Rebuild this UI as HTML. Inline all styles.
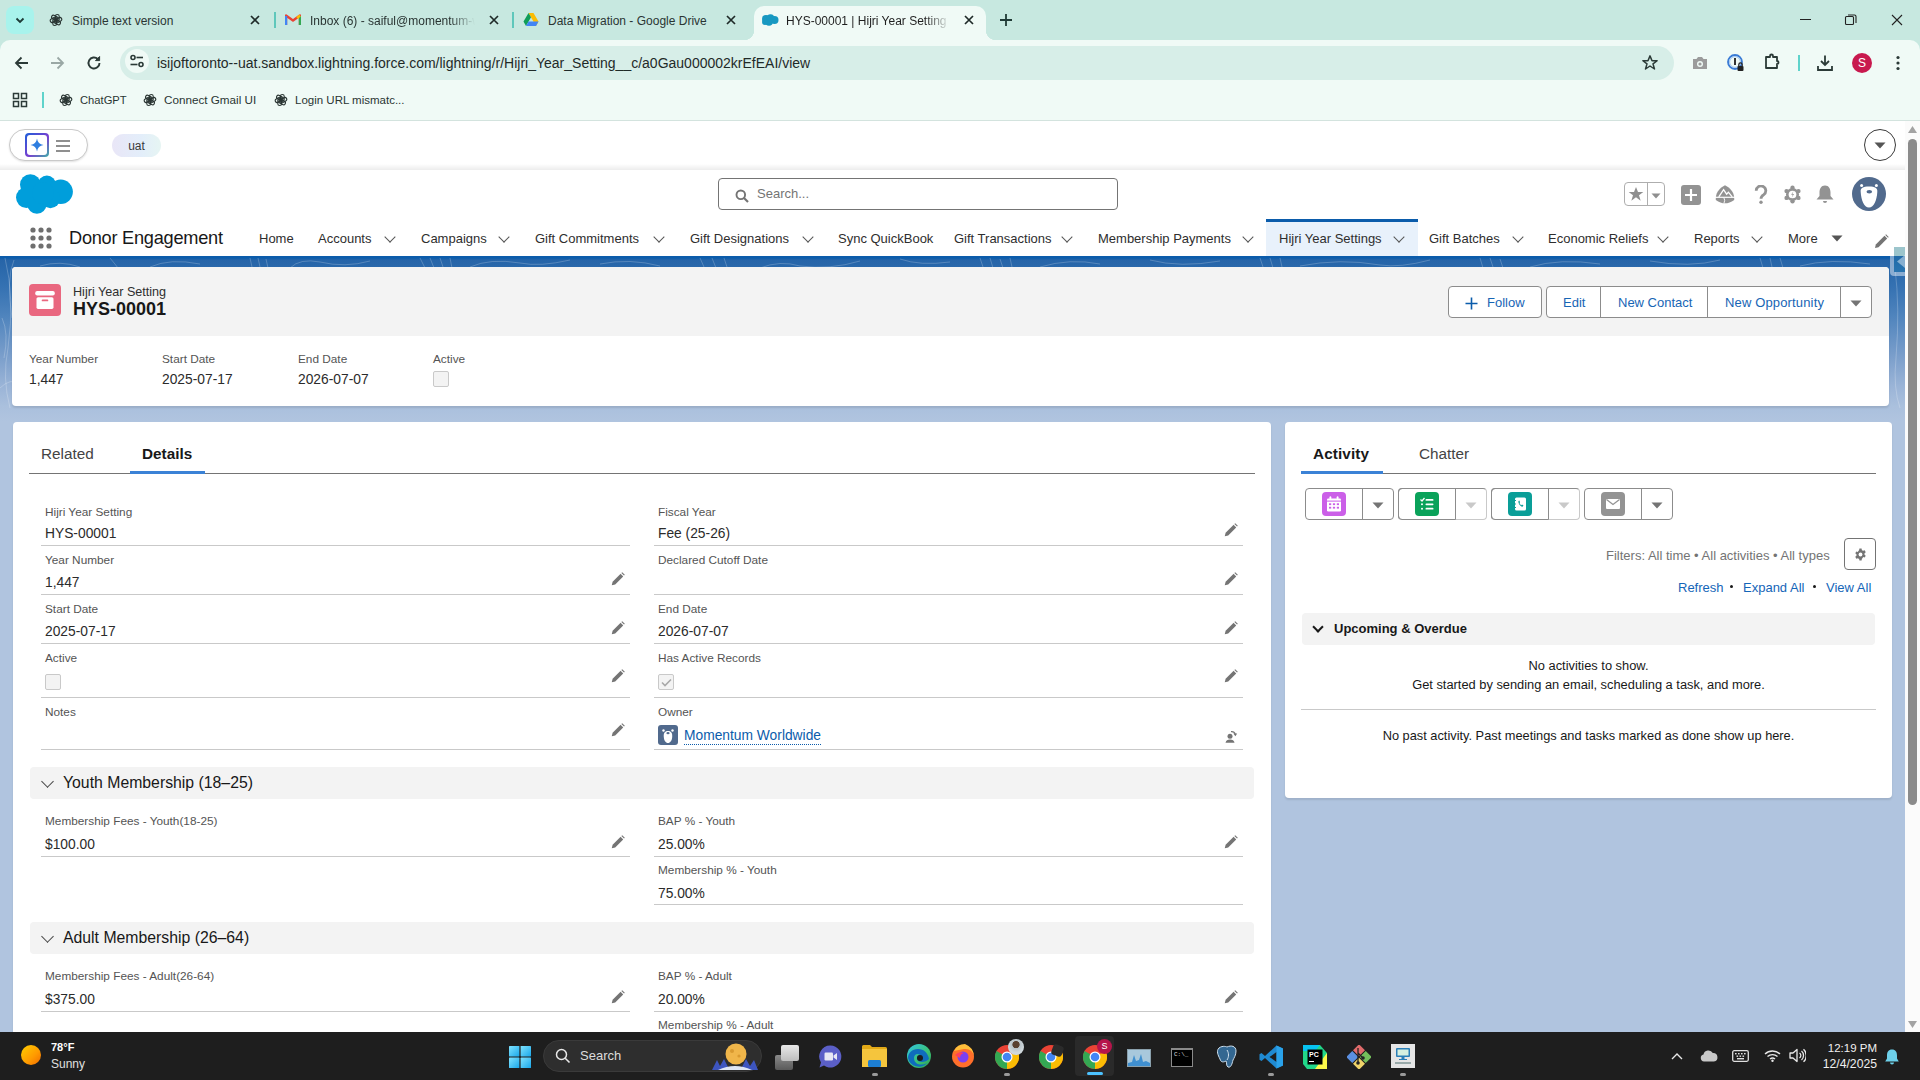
<!DOCTYPE html>
<html><head><meta charset="utf-8">
<style>
*{box-sizing:border-box;margin:0;padding:0}
html,body{width:1920px;height:1080px;overflow:hidden;font-family:"Liberation Sans",sans-serif;color:#181818;background:#b0c4df;position:relative}
.abs{position:absolute}
svg{display:block}
#tabstrip{left:0;top:0;width:1920px;height:40px;background:#c7e8e0}
#toolbar{left:0;top:40px;width:1920px;height:40px;background:#c7e8e0}
#bookmarks{left:0;top:80px;width:1920px;height:41px;background:#f0faf6;border-bottom:1px solid #d3e3de}
.tabt{top:12px;font-size:12px;line-height:18px;color:#2a3533;white-space:nowrap;overflow:hidden}
.fade{-webkit-mask-image:linear-gradient(90deg,#000 85%,transparent 100%)}
.tabx{top:12px;font-size:14px;line-height:18px;color:#1f2a28;width:14px;text-align:center}
.bmt{top:11px;line-height:18px;color:#2a3533;white-space:nowrap}
#sftop{left:0;top:121px;width:1905px;height:49px;background:#fff}
#sfheader{left:0;top:170px;width:1905px;height:48px;background:#fff}
#sfnav{left:0;top:218px;width:1905px;height:38px;background:#fff}
#bg{left:0;top:256px;width:1905px;height:776px;background:linear-gradient(180deg,#0b5cab 0px,#0b5cab 2px,#2664a8 4px,#3471b2 30px,#4f84bd 60px,#7a9ecb 100px,#9ab4d7 130px,#aac0dd 150px,#b0c4df 165px)}
#scroll{left:1905px;top:121px;width:15px;height:911px;background:#fbfbfb}
#taskbar{left:0;top:1032px;width:1920px;height:48px;background:#1e1e1e}
.navt{position:absolute;top:13px;font-size:13px;line-height:16px;color:#2e2e2e;white-space:nowrap}
.chev{position:absolute;top:15px;width:8px;height:8px;margin-left:2px;border-right:1.5px solid #555;border-bottom:1.5px solid #555;transform:rotate(45deg)}
.btn{border:1px solid #8c8c8c;border-radius:4px;background:#fff}
.btxt{font-size:13px;line-height:16px;color:#1765b5;white-space:nowrap}
.hl{font-size:11.8px;line-height:14px;color:#545454;white-space:nowrap}
.hv{font-size:13.8px;line-height:17px;color:#2b2b2b;white-space:nowrap}
.cb{width:16px;height:16px;border:1px solid #c9c9c9;border-radius:2px;background:#f3f3f3}
.fl{font-size:11.8px;line-height:14px;color:#545454;white-space:nowrap}
.fv{font-size:13.8px;line-height:17px;color:#2b2b2b;white-space:nowrap}
.sect{left:30px;width:1224px;height:32px;background:#f3f3f3;border-radius:4px}
.schev{width:9px;height:9px;border-right:1.6px solid #444;border-bottom:1.6px solid #444;transform:rotate(45deg)}
.stt{font-size:15.8px;line-height:20px;color:#181818;white-space:nowrap}
.lnk{font-size:13px;line-height:16px;color:#1465b8;white-space:nowrap}
.card{background:#fff;border-radius:4px;box-shadow:0 2px 2px rgba(0,0,0,.1)}
</style></head>
<body>
<!-- CHROME -->
<div id="tabstrip" class="abs">
  <div class="abs" style="left:6px;top:6px;width:28px;height:28px;border-radius:8px;background:#a8f3ec"></div>
  <svg class="abs" style="left:13px;top:13px" width="14" height="14" viewBox="0 0 14 14"><path d="M3.5 5.5 L7 9 L10.5 5.5" fill="none" stroke="#1d3a36" stroke-width="1.8"/></svg>
  <!-- tab1 -->
  <svg class="abs" style="left:49px;top:13px" width="14" height="14" viewBox="0 0 24 24"><g fill="none" stroke="#2a3533" stroke-width="1.9"><rect x="11" y="2.5" width="6.5" height="12" rx="3.25" transform="rotate(0 12 12)"/><rect x="11" y="2.5" width="6.5" height="12" rx="3.25" transform="rotate(60 12 12)"/><rect x="11" y="2.5" width="6.5" height="12" rx="3.25" transform="rotate(120 12 12)"/><rect x="11" y="2.5" width="6.5" height="12" rx="3.25" transform="rotate(180 12 12)"/><rect x="11" y="2.5" width="6.5" height="12" rx="3.25" transform="rotate(240 12 12)"/><rect x="11" y="2.5" width="6.5" height="12" rx="3.25" transform="rotate(300 12 12)"/></g></svg>
  <div class="abs tabt" style="left:72px;width:170px">Simple text version</div>
  <svg class="abs" style="left:250px;top:15px" width="10" height="10" viewBox="0 0 10 10"><path d="M1 1L9 9M9 1L1 9" stroke="#1f2a28" stroke-width="1.7"/></svg>
  <div class="abs" style="left:274px;top:12px;width:2px;height:16px;background:#5fc7bb"></div>
  <!-- tab2 gmail -->
  <svg class="abs" style="left:285px;top:13px" width="16" height="13" viewBox="0 0 16 13"><path d="M1 12V2.5L8 7.5L15 2.5V12" fill="none" stroke="#ea4335" stroke-width="2.4" stroke-linejoin="round"/><path d="M1 12V3" stroke="#4285f4" stroke-width="2.4"/><path d="M15 12V3" stroke="#34a853" stroke-width="2.4"/><path d="M12 5 L15 2.5" stroke="#fbbc04" stroke-width="2.4"/></svg>
  <div class="abs tabt fade" style="left:310px;width:165px">Inbox (6) - saiful@momentum-w</div>
  <svg class="abs" style="left:489px;top:15px" width="10" height="10" viewBox="0 0 10 10"><path d="M1 1L9 9M9 1L1 9" stroke="#1f2a28" stroke-width="1.7"/></svg>
  <div class="abs" style="left:512px;top:12px;width:2px;height:16px;background:#5fc7bb"></div>
  <!-- tab3 drive -->
  <svg class="abs" style="left:523px;top:12px" width="16" height="15" viewBox="0 0 16 15"><path d="M5.5 1 L10.5 1 L15.5 9.5 L13 14 Z" fill="#fbbc04"/><path d="M5.5 1 L0.5 9.5 L3 14 L8 5.3 Z" fill="#0f9d58"/><path d="M3 14 L13 14 L15.5 9.5 L5.5 9.5 Z" fill="#4285f4"/></svg>
  <div class="abs tabt" style="left:548px;width:170px">Data Migration - Google Drive</div>
  <svg class="abs" style="left:726px;top:15px" width="10" height="10" viewBox="0 0 10 10"><path d="M1 1L9 9M9 1L1 9" stroke="#1f2a28" stroke-width="1.7"/></svg>
  <!-- active tab -->
  <div class="abs" style="left:754px;top:6px;width:232px;height:34px;background:#f0faf6;border-radius:10px 10px 0 0"></div>
  <div class="abs" style="left:744px;top:30px;width:10px;height:10px;background:radial-gradient(circle at 0 0,#c7e8e0 10px,#f0faf6 10.5px)"></div>
  <div class="abs" style="left:986px;top:30px;width:10px;height:10px;background:radial-gradient(circle at 100% 0,#c7e8e0 10px,#f0faf6 10.5px)"></div>
  <svg class="abs" style="left:761px;top:14px" width="18" height="12" viewBox="0 0 18 12"><g fill="#1798c1"><circle cx="5" cy="5" r="4"/><circle cx="9.5" cy="4" r="3.8"/><circle cx="13.5" cy="6" r="4"/><circle cx="8" cy="8" r="3.8"/><circle cx="4" cy="8" r="3"/></g></svg>
  <div class="abs tabt fade" style="left:786px;width:164px;color:#1f1f1f">HYS-00001 | Hijri Year Setting | S</div>
  <svg class="abs" style="left:964px;top:15px" width="10" height="10" viewBox="0 0 10 10"><path d="M1 1L9 9M9 1L1 9" stroke="#1f2a28" stroke-width="1.7"/></svg>
  <svg class="abs" style="left:998px;top:12px" width="16" height="16" viewBox="0 0 16 16"><path d="M8 2V14M2 8H14" stroke="#1f3a36" stroke-width="1.8"/></svg>
  <!-- window controls -->
  <div class="abs" style="left:1800px;top:19px;width:11px;height:1px;background:#222"></div>
  <svg class="abs" style="left:1844px;top:13px" width="14" height="14" viewBox="0 0 14 14"><rect x="1.5" y="3.5" width="8" height="8" rx="1" fill="none" stroke="#222" stroke-width="1.1"/><path d="M4 2H10.5a1.5 1.5 0 0 1 1.5 1.5V10" fill="none" stroke="#222" stroke-width="1.1"/></svg>
  <svg class="abs" style="left:1891px;top:14px" width="12" height="12" viewBox="0 0 12 12"><path d="M1 1L11 11M11 1L1 11" stroke="#222" stroke-width="1.1"/></svg>
</div>
<div id="toolbar" class="abs">
  <div class="abs" style="left:0;top:0;width:1920px;height:40px;background:#f0faf6;border-radius:10px 10px 0 0"></div>
  <svg class="abs" style="left:13px;top:54px;top:14px" width="18" height="18" viewBox="0 0 18 18"><path d="M15 9H3.5M8.5 3.5L3 9L8.5 14.5" fill="none" stroke="#2b3a37" stroke-width="1.8"/></svg>
  <svg class="abs" style="left:48px;top:14px" width="18" height="18" viewBox="0 0 18 18"><path d="M3 9H14.5M9.5 3.5L15 9L9.5 14.5" fill="none" stroke="#9aa8a5" stroke-width="1.8"/></svg>
  <svg class="abs" style="left:85px;top:14px" width="18" height="18" viewBox="0 0 18 18"><path d="M14.5 9A5.5 5.5 0 1 1 12.8 5" fill="none" stroke="#2b3a37" stroke-width="1.9"/><path d="M14.6 2.5V6.6H10.5Z" fill="#2b3a37" stroke="#2b3a37" stroke-width="1"/></svg>
  <div class="abs" style="left:120px;top:6px;width:1554px;height:34px;border-radius:17px;background:#d7eee8"></div>
  <div class="abs" style="left:125px;top:9px;width:24px;height:24px;border-radius:12px;background:#f0faf6"></div>
  <svg class="abs" style="left:129px;top:14px" width="16" height="14" viewBox="0 0 16 14"><g fill="none" stroke="#2b3a37" stroke-width="1.6"><circle cx="4" cy="3.5" r="2"/><path d="M7.5 3.5H14"/><circle cx="12" cy="10.5" r="2"/><path d="M1.5 10.5H8.5"/></g></svg>
  <div class="abs" style="left:157px;top:14px;font-size:14px;line-height:18px;color:#1f2a28;white-space:nowrap">isijoftoronto--uat.sandbox.lightning.force.com/lightning/r/Hijri_Year_Setting__c/a0Gau000002krEfEAI/view</div>
  <svg class="abs" style="left:1641px;top:14px" width="18" height="18" viewBox="0 0 24 24"><path d="M12 2.5L14.7 9H21.5L16 13.2L18 20L12 16L6 20L8 13.2L2.5 9H9.3Z" fill="none" stroke="#2b3a37" stroke-width="2" stroke-linejoin="round"/></svg>
  <svg class="abs" style="left:1691px;top:15px" width="18" height="16" viewBox="0 0 18 16"><path d="M2 4H5.5L7 2H11L12.5 4H16V14H2Z" fill="#9b9b9b"/><circle cx="9" cy="9" r="3" fill="#f0faf6"/><circle cx="9" cy="9" r="1.6" fill="#9b9b9b"/></svg>
  <svg class="abs" style="left:1727px;top:14px" width="20" height="20" viewBox="0 0 20 20"><circle cx="8" cy="8" r="7" fill="none" stroke="#3a7bd5" stroke-width="1.8"/><circle cx="8" cy="8" r="5.4" fill="none" stroke="#9ec3f0" stroke-width="1"/><rect x="7" y="4" width="2" height="7" fill="#333"/><rect x="10.5" y="12" width="6" height="5" rx="1" fill="#222"/><path d="M11.8 12V10.5a1.7 1.7 0 0 1 3.4 0V12" fill="none" stroke="#222" stroke-width="1.2"/></svg>
  <svg class="abs" style="left:1763px;top:13px" width="18" height="18" viewBox="0 0 18 18"><path d="M3 4H7V3a1.5 1.5 0 0 1 3 0V4H14V8a1.5 1.5 0 0 1 0 3V15H3Z" fill="none" stroke="#2b3a37" stroke-width="1.8" stroke-linejoin="round"/></svg>
  <div class="abs" style="left:1798px;top:15px;width:2px;height:16px;background:#5fd3cb"></div>
  <svg class="abs" style="left:1816px;top:14px" width="18" height="18" viewBox="0 0 18 18"><path d="M9 1.5V11M5 7L9 11L13 7" fill="none" stroke="#2b3a37" stroke-width="1.8"/><path d="M2 12V16H16V12" fill="none" stroke="#2b3a37" stroke-width="1.8"/></svg>
  <div class="abs" style="left:1852px;top:13px;width:20px;height:20px;border-radius:10px;background:#c8194e;color:#fff;font-size:12px;line-height:20px;text-align:center">S</div>
  <svg class="abs" style="left:1895px;top:15px" width="6" height="16" viewBox="0 0 6 16"><g fill="#2b3a37"><circle cx="3" cy="2.5" r="1.6"/><circle cx="3" cy="8" r="1.6"/><circle cx="3" cy="13.5" r="1.6"/></g></svg>
</div>
<div id="bookmarks" class="abs">
  <svg class="abs" style="left:12px;top:12px" width="16" height="16" viewBox="0 0 16 16"><g fill="none" stroke="#2b3a37" stroke-width="1.5"><rect x="1.5" y="1.5" width="5" height="5"/><rect x="9.5" y="1.5" width="5" height="5"/><rect x="1.5" y="9.5" width="5" height="5"/><rect x="9.5" y="9.5" width="5" height="5"/></g></svg>
  <div class="abs" style="left:42px;top:12px;width:2px;height:16px;background:#5fd3cb"></div>
  <svg class="abs gpt" style="left:59px;top:93px;top:13px" width="14" height="14" viewBox="0 0 24 24"><g fill="none" stroke="#2a3533" stroke-width="1.9"><rect x="11" y="2.5" width="6.5" height="12" rx="3.25" transform="rotate(0 12 12)"/><rect x="11" y="2.5" width="6.5" height="12" rx="3.25" transform="rotate(60 12 12)"/><rect x="11" y="2.5" width="6.5" height="12" rx="3.25" transform="rotate(120 12 12)"/><rect x="11" y="2.5" width="6.5" height="12" rx="3.25" transform="rotate(180 12 12)"/><rect x="11" y="2.5" width="6.5" height="12" rx="3.25" transform="rotate(240 12 12)"/><rect x="11" y="2.5" width="6.5" height="12" rx="3.25" transform="rotate(300 12 12)"/></g></svg>
  <div class="abs bmt" style="left:80px;font-size:11.2px">ChatGPT</div>
  <svg class="abs gpt" style="left:143px;top:93px;top:13px" width="14" height="14" viewBox="0 0 24 24"><g fill="none" stroke="#2a3533" stroke-width="1.9"><rect x="11" y="2.5" width="6.5" height="12" rx="3.25" transform="rotate(0 12 12)"/><rect x="11" y="2.5" width="6.5" height="12" rx="3.25" transform="rotate(60 12 12)"/><rect x="11" y="2.5" width="6.5" height="12" rx="3.25" transform="rotate(120 12 12)"/><rect x="11" y="2.5" width="6.5" height="12" rx="3.25" transform="rotate(180 12 12)"/><rect x="11" y="2.5" width="6.5" height="12" rx="3.25" transform="rotate(240 12 12)"/><rect x="11" y="2.5" width="6.5" height="12" rx="3.25" transform="rotate(300 12 12)"/></g></svg>
  <div class="abs bmt" style="left:164px;font-size:11.7px">Connect Gmail UI</div>
  <svg class="abs gpt" style="left:274px;top:93px;top:13px" width="14" height="14" viewBox="0 0 24 24"><g fill="none" stroke="#2a3533" stroke-width="1.9"><rect x="11" y="2.5" width="6.5" height="12" rx="3.25" transform="rotate(0 12 12)"/><rect x="11" y="2.5" width="6.5" height="12" rx="3.25" transform="rotate(60 12 12)"/><rect x="11" y="2.5" width="6.5" height="12" rx="3.25" transform="rotate(120 12 12)"/><rect x="11" y="2.5" width="6.5" height="12" rx="3.25" transform="rotate(180 12 12)"/><rect x="11" y="2.5" width="6.5" height="12" rx="3.25" transform="rotate(240 12 12)"/><rect x="11" y="2.5" width="6.5" height="12" rx="3.25" transform="rotate(300 12 12)"/></g></svg>
  <div class="abs bmt" style="left:295px;font-size:11.5px">Login URL mismatc...</div>
</div>
<!-- SF TOP -->
<div id="sftop" class="abs">
  <div class="abs" style="left:9px;top:8px;width:79px;height:32px;border:1px solid #c9c9c9;border-radius:16px;box-shadow:0 1px 2px rgba(0,0,0,.12);background:#fff"></div>
  <div class="abs" style="left:25px;top:12px;width:24px;height:24px;border-radius:4px;background:linear-gradient(135deg,#1b5fd9,#7a3fd0 55%,#3fb0a8)"></div>
  <div class="abs" style="left:27px;top:14px;width:20px;height:20px;border-radius:3px;background:#fff"></div>
  <svg class="abs" style="left:30px;top:17px" width="14" height="14" viewBox="0 0 14 14"><path d="M7 0.5 Q7.8 6.2 13.5 7 Q7.8 7.8 7 13.5 Q6.2 7.8 0.5 7 Q6.2 6.2 7 0.5Z" fill="#2f7ee0"/></svg>
  <svg class="abs" style="left:56px;top:19px" width="14" height="12" viewBox="0 0 14 12"><g stroke="#6b6b6b" stroke-width="1.3"><path d="M0 1H14M0 6H14M0 11H14"/></g></svg>
  <div class="abs" style="left:112px;top:13px;width:49px;height:23px;border-radius:12px;background:linear-gradient(90deg,#e9e6f7,#e3eefa 60%,#e6f5f3);font-size:12px;line-height:25px;text-align:center;color:#3a3a3a">uat</div>
  <div class="abs" style="left:1864px;top:8px;width:32px;height:32px;border:1px solid #3a3a3a;border-radius:16px"></div>
  <svg class="abs" style="left:1874px;top:21px" width="12" height="7" viewBox="0 0 12 7"><path d="M0.5 0.5H11.5L6 6.5Z" fill="#555"/></svg>
</div>
<div class="abs" style="left:0;top:164px;width:1905px;height:6px;background:linear-gradient(180deg,rgba(0,0,0,0),rgba(0,0,0,.075))"></div>
<div id="sfheader" class="abs">
  <svg class="abs" style="left:15px;top:3px" width="59" height="42" viewBox="0 0 59 42"><g fill="#009edb"><circle cx="15.4" cy="11.7" r="10.4"/><circle cx="31.9" cy="11.7" r="9.1"/><circle cx="45.7" cy="18.8" r="12.2"/><circle cx="11.4" cy="24.6" r="10.4"/><circle cx="21.9" cy="31.2" r="9.6"/><circle cx="35.4" cy="25.4" r="9.8"/><circle cx="28" cy="20" r="11"/></g></svg>
  <div class="abs" style="left:718px;top:8px;width:400px;height:32px;border:1px solid #747474;border-radius:4px;background:#fff"></div>
  <svg class="abs" style="left:735px;top:19px" width="14" height="14" viewBox="0 0 14 14"><circle cx="5.8" cy="5.8" r="4.3" fill="none" stroke="#747474" stroke-width="1.9"/><path d="M9 9L13 13" stroke="#747474" stroke-width="2.2"/></svg>
  <div class="abs" style="left:757px;top:16px;font-size:13px;line-height:16px;color:#747474">Search...</div>
  <div class="abs" style="left:1624px;top:12px;width:41px;height:24px;border:1px solid #aeaeae;border-radius:4px"></div>
  <div class="abs" style="left:1647px;top:13px;width:1px;height:22px;background:#aeaeae"></div>
  <svg class="abs" style="left:1628px;top:16px" width="16" height="16" viewBox="0 0 24 24"><path d="M12 1.5L15 9H23L16.5 14L19 22L12 17L5 22L7.5 14L1 9H9Z" fill="#8f8f8f"/></svg>
  <svg class="abs" style="left:1651px;top:23px" width="10" height="6" viewBox="0 0 10 6"><path d="M0.5 0.5H9.5L5 5.5Z" fill="#8f8f8f"/></svg>
  <div class="abs" style="left:1681px;top:15px;width:20px;height:20px;border-radius:3px;background:#939393"></div>
  <svg class="abs" style="left:1681px;top:15px" width="20" height="20" viewBox="0 0 20 20"><path d="M10 4V16M4 10H16" stroke="#fff" stroke-width="2.2"/></svg>
  <svg class="abs" style="left:1715px;top:15px" width="20" height="19" viewBox="0 0 20 19"><path d="M10 0.3 C14.5 2.5 18.6 6.5 19.2 12.5 L19.2 15 C16 17.5 13 18.3 10 18.3 C7 18.3 4 17.5 0.8 15 L0.8 12.5 C1.4 6.5 5.5 2.5 10 0.3Z" fill="#939393"/><path d="M0 12.3 H20" stroke="#fff" stroke-width="1.2"/><path d="M3.8 11.8 L8.6 4.6 L11.6 9.2 L13.4 7.2 L17.2 11.8" fill="none" stroke="#fff" stroke-width="1.3" stroke-linejoin="miter"/><path d="M8.8 12.5 L9.7 15.3 L8.9 18.5" fill="none" stroke="#fff" stroke-width="0.9"/></svg>
  <svg class="abs" style="left:1754px;top:15px" width="14" height="19" viewBox="0 0 14 19"><path d="M2.2 5.8 A4.8 4.8 0 1 1 9.8 9.6 C7.8 10.8 7 11.6 7 13.8" fill="none" stroke="#939393" stroke-width="2.8"/><circle cx="7" cy="17.2" r="1.7" fill="#939393"/></svg>
  <svg class="abs" style="left:1783px;top:15px" width="19" height="19" viewBox="0 0 19.2 19.2"><g fill="#939393"><circle cx="9.60" cy="2.70" r="2.2"/><circle cx="15.58" cy="6.15" r="2.2"/><circle cx="15.58" cy="13.05" r="2.2"/><circle cx="9.60" cy="16.50" r="2.2"/><circle cx="3.62" cy="13.05" r="2.2"/><circle cx="3.62" cy="6.15" r="2.2"/><circle cx="9.6" cy="9.6" r="6.6"/></g><circle cx="9.6" cy="9.6" r="3.9" fill="#fff"/><path d="M10.6 6.4 L8.2 9.9 H9.9 L8.7 12.9 L11.2 9.2 H9.5Z" fill="#939393"/></svg>
  <svg class="abs" style="left:1815px;top:14px" width="20" height="20" viewBox="0 0 20 20"><path d="M10 1.5 C14 1.5 15.5 5 15.5 8.5 V12 L18.5 15.5 H1.5 L4.5 12 V8.5 C4.5 5 6 1.5 10 1.5Z" fill="#939393"/><path d="M8 17 H12 A2 2 0 0 1 8 17Z" fill="#939393"/></svg>
  <div class="abs" style="left:1852px;top:7px;width:34px;height:34px;border-radius:17px;background:#516a8d"></div>
  <svg class="abs" style="left:1852px;top:7px" width="34" height="34" viewBox="0 0 34 34"><path d="M17 9.5 C23 9.5 25.8 11 25.3 15 C24.8 23 22 30.5 17 30.5 C12 30.5 9.2 23 8.7 15 C8.2 11 11 9.5 17 9.5Z" fill="#fff"/><circle cx="9.6" cy="8.6" r="1.5" fill="#fff"/><circle cx="24.4" cy="8.6" r="1.5" fill="#fff"/><ellipse cx="17.3" cy="14.8" rx="2.8" ry="1.8" fill="#516a8d"/></svg>
</div>
<div id="sfnav" class="abs">
  <svg class="abs" style="left:30px;top:9px" width="22" height="22" viewBox="0 0 22 22"><g fill="#6f6f6f"><circle cx="3" cy="3" r="2.6"/><circle cx="11" cy="3" r="2.6"/><circle cx="19" cy="3" r="2.6"/><circle cx="3" cy="11" r="2.6"/><circle cx="11" cy="11" r="2.6"/><circle cx="19" cy="11" r="2.6"/><circle cx="3" cy="19" r="2.6"/><circle cx="11" cy="19" r="2.6"/><circle cx="19" cy="19" r="2.6"/></g></svg>
  <div class="abs" style="left:69px;top:9px;font-size:18.2px;line-height:22px;color:#181818;letter-spacing:-0.25px">Donor Engagement</div>
  <div class="abs" style="left:1266px;top:1px;width:152px;height:37px;background:#e8f1fb"></div>
  <div class="abs" style="left:1266px;top:1px;width:152px;height:3px;background:#0b5cab"></div>
  <div class="navt" style="left:259px">Home</div>
  <div class="navt" style="left:318px">Accounts</div><div class="chev" style="left:384px"></div>
  <div class="navt" style="left:421px">Campaigns</div><div class="chev" style="left:498px"></div>
  <div class="navt" style="left:535px">Gift Commitments</div><div class="chev" style="left:653px"></div>
  <div class="navt" style="left:690px">Gift Designations</div><div class="chev" style="left:802px"></div>
  <div class="navt" style="left:838px">Sync QuickBook</div>
  <div class="navt" style="left:954px">Gift Transactions</div><div class="chev" style="left:1061px"></div>
  <div class="navt" style="left:1098px">Membership Payments</div><div class="chev" style="left:1242px"></div>
  <div class="navt" style="left:1279px">Hijri Year Settings</div><div class="chev" style="left:1393px"></div>
  <div class="navt" style="left:1429px">Gift Batches</div><div class="chev" style="left:1512px"></div>
  <div class="navt" style="left:1548px">Economic Reliefs</div><div class="chev" style="left:1657px"></div>
  <div class="navt" style="left:1694px">Reports</div><div class="chev" style="left:1751px"></div>
  <div class="navt" style="left:1788px">More</div>
  <svg class="abs" style="left:1831px;top:17px" width="12" height="7" viewBox="0 0 12 7"><path d="M0.5 0.5H11.5L6 6.5Z" fill="#555"/></svg>
  <svg class="abs" style="left:1874px;top:16px" width="15" height="15" viewBox="0 0 15 15"><path d="M1 14 L1.8 10.5 L10.5 1.8 L13.2 4.5 L4.5 13.2Z" fill="#747474"/><path d="M11.3 1 L12 0.3 L14.7 3 L14 3.7Z" fill="#747474"/></svg>
</div>
<div id="bg" class="abs"></div>
<svg class="abs" style="left:0;top:258px" width="1905" height="150" viewBox="0 0 1905 150"><g fill="none" stroke="rgba(255,255,255,.22)" stroke-width="1">
<path d="M5 0 Q15 40 8 90 Q2 120 10 150"/><path d="M14 2 Q6 20 12 60"/><path d="M0 130 Q10 120 20 125"/><path d="M2 60 Q9 75 4 100"/>
<path d="M40 8 Q60 2 80 9"/><path d="M110 0 Q115 6 118 10"/><path d="M150 9 Q170 0 200 6"/><path d="M250 0 L252 9 M258 0 L260 9 M266 1 L268 10"/><path d="M290 10 Q300 0 320 4 Q345 10 370 3"/>
<path d="M420 0 L425 10 M430 0 L434 10 M440 0 L443 9 M450 0 L452 10"/><path d="M470 9 Q490 0 520 5 Q540 9 570 2"/><path d="M600 6 Q630 0 660 8"/><path d="M700 0 L704 9 M712 0 L716 10 M724 0 L727 9"/>
<path d="M760 10 Q780 2 800 8 Q830 12 860 3"/><path d="M900 1 Q920 8 950 4"/><path d="M980 0 L983 9 M990 0 L993 10 M1000 1 L1003 10 M1010 0 L1012 9"/><path d="M1040 9 Q1070 0 1100 6"/>
<path d="M1150 2 Q1180 10 1220 3"/><path d="M1260 0 L1263 9 M1270 0 L1273 10 M1280 0 L1282 9"/><path d="M1300 8 Q1340 0 1380 7 Q1400 10 1430 2"/><path d="M1480 0 L1483 10 M1490 0 L1493 9 M1500 1 L1503 10"/>
<path d="M1530 9 Q1560 0 1600 6"/><path d="M1650 3 Q1690 10 1720 2"/><path d="M1760 0 L1763 10 M1770 0 L1772 9 M1780 0 L1783 10"/><path d="M1800 8 Q1830 0 1870 6"/>
<path d="M1895 10 Q1900 50 1896 100 Q1893 130 1900 150"/>
</g></svg>
<!-- header card -->
<div id="hdrcard" class="abs card" style="left:12px;top:267px;width:1877px;height:139px;overflow:hidden">
  <div class="abs" style="left:0;top:0;width:100%;height:69px;background:#f3f3f3"></div>
</div>
<div class="abs" style="left:29px;top:284px;width:32px;height:32px;border-radius:4px;background:#e9677f"></div>
<svg class="abs" style="left:29px;top:284px" width="32" height="32" viewBox="0 0 32 32"><rect x="6.2" y="7.1" width="19.6" height="4.5" rx="2" fill="#fff"/><rect x="7.5" y="13.2" width="17" height="11.7" rx="1.6" fill="#fff"/><rect x="12.7" y="15.6" width="6.6" height="1.7" rx=".85" fill="#e9677f"/></svg>
<div class="abs" style="left:73px;top:284px;font-size:12.6px;line-height:16px;color:#2e2e2e">Hijri Year Setting</div>
<div class="abs" style="left:73px;top:298px;font-size:18px;line-height:22px;font-weight:bold;color:#181818">HYS-00001</div>
<div class="abs btn" style="left:1448px;top:286px;width:94px;height:32px"></div>
<svg class="abs" style="left:1465px;top:297px" width="13" height="13" viewBox="0 0 13 13"><path d="M6.5 0.5V12.5M0.5 6.5H12.5" stroke="#0b5cab" stroke-width="1.6"/></svg>
<div class="abs btxt" style="left:1487px;top:295px">Follow</div>
<div class="abs btn" style="left:1546px;top:286px;width:326px;height:32px"></div>
<div class="abs" style="left:1600px;top:287px;width:1px;height:30px;background:#8c8c8c"></div>
<div class="abs" style="left:1707px;top:287px;width:1px;height:30px;background:#8c8c8c"></div>
<div class="abs" style="left:1840px;top:287px;width:1px;height:30px;background:#8c8c8c"></div>
<div class="abs btxt" style="left:1563px;top:295px">Edit</div>
<div class="abs btxt" style="left:1618px;top:295px">New Contact</div>
<div class="abs btxt" style="left:1725px;top:295px;letter-spacing:0.15px">New Opportunity</div>
<svg class="abs" style="left:1850px;top:300px" width="12" height="7" viewBox="0 0 12 7"><path d="M0.5 0.5H11.5L6 6.5Z" fill="#747474"/></svg>
<!-- highlights -->
<div class="abs hl" style="left:29px;top:352px">Year Number</div>
<div class="abs hv" style="left:29px;top:371px">1,447</div>
<div class="abs hl" style="left:162px;top:352px">Start Date</div>
<div class="abs hv" style="left:162px;top:371px">2025-07-17</div>
<div class="abs hl" style="left:298px;top:352px">End Date</div>
<div class="abs hv" style="left:298px;top:371px">2026-07-07</div>
<div class="abs hl" style="left:433px;top:352px">Active</div>
<div class="abs cb" style="left:433px;top:371px"></div>

<!-- left card -->
<div id="leftcard" class="abs card" style="left:13px;top:422px;width:1258px;height:640px"></div>
<div class="abs" style="left:41px;top:444px;font-size:15.3px;line-height:20px;color:#444">Related</div>
<div class="abs" style="left:142px;top:444px;font-size:15.3px;line-height:20px;color:#181818;font-weight:bold">Details</div>
<div class="abs" style="left:29px;top:473px;width:1226px;height:1px;background:#747474"></div>
<div class="abs" style="left:130px;top:471px;width:75px;height:3px;background:#3b82d6"></div>
<div class="abs fl" style="left:45px;top:505px">Hijri Year Setting</div>
<div class="abs fv" style="left:45px;top:525px">HYS-00001</div>
<div class="abs" style="left:41px;top:545px;width:589px;height:1px;background:#c9c9c9"></div>
<div class="abs fl" style="left:45px;top:552.5px">Year Number</div>
<div class="abs fv" style="left:45px;top:574px">1,447</div>
<svg class="abs pen" style="left:611px;top:572px" width="14" height="14" viewBox="0 0 14 14"><path d="M0.8 13.2 L1.6 9.8 L9.6 1.8 L12.2 4.4 L4.2 12.4Z" fill="#747474"/><path d="M10.4 1 L11.2 0.2 L13.8 2.8 L13 3.6Z" fill="#747474"/></svg>
<div class="abs" style="left:41px;top:594px;width:589px;height:1px;background:#c9c9c9"></div>
<div class="abs fl" style="left:45px;top:601.5px">Start Date</div>
<div class="abs fv" style="left:45px;top:623px">2025-07-17</div>
<svg class="abs pen" style="left:611px;top:621px" width="14" height="14" viewBox="0 0 14 14"><path d="M0.8 13.2 L1.6 9.8 L9.6 1.8 L12.2 4.4 L4.2 12.4Z" fill="#747474"/><path d="M10.4 1 L11.2 0.2 L13.8 2.8 L13 3.6Z" fill="#747474"/></svg>
<div class="abs" style="left:41px;top:643px;width:589px;height:1px;background:#c9c9c9"></div>
<div class="abs fl" style="left:45px;top:650.5px">Active</div>
<div class="abs cb" style="left:45px;top:674px"></div>
<svg class="abs pen" style="left:611px;top:669px" width="14" height="14" viewBox="0 0 14 14"><path d="M0.8 13.2 L1.6 9.8 L9.6 1.8 L12.2 4.4 L4.2 12.4Z" fill="#747474"/><path d="M10.4 1 L11.2 0.2 L13.8 2.8 L13 3.6Z" fill="#747474"/></svg>
<div class="abs" style="left:41px;top:697px;width:589px;height:1px;background:#c9c9c9"></div>
<div class="abs fl" style="left:45px;top:704.5px">Notes</div>
<svg class="abs pen" style="left:611px;top:723px" width="14" height="14" viewBox="0 0 14 14"><path d="M0.8 13.2 L1.6 9.8 L9.6 1.8 L12.2 4.4 L4.2 12.4Z" fill="#747474"/><path d="M10.4 1 L11.2 0.2 L13.8 2.8 L13 3.6Z" fill="#747474"/></svg>
<div class="abs" style="left:41px;top:749px;width:589px;height:1px;background:#c9c9c9"></div>
<div class="abs fl" style="left:658px;top:505px">Fiscal Year</div>
<div class="abs fv" style="left:658px;top:525px">Fee (25-26)</div>
<svg class="abs pen" style="left:1224px;top:523px" width="14" height="14" viewBox="0 0 14 14"><path d="M0.8 13.2 L1.6 9.8 L9.6 1.8 L12.2 4.4 L4.2 12.4Z" fill="#747474"/><path d="M10.4 1 L11.2 0.2 L13.8 2.8 L13 3.6Z" fill="#747474"/></svg>
<div class="abs" style="left:654px;top:545px;width:589px;height:1px;background:#c9c9c9"></div>
<div class="abs fl" style="left:658px;top:552.5px">Declared Cutoff Date</div>
<svg class="abs pen" style="left:1224px;top:572px" width="14" height="14" viewBox="0 0 14 14"><path d="M0.8 13.2 L1.6 9.8 L9.6 1.8 L12.2 4.4 L4.2 12.4Z" fill="#747474"/><path d="M10.4 1 L11.2 0.2 L13.8 2.8 L13 3.6Z" fill="#747474"/></svg>
<div class="abs" style="left:654px;top:594px;width:589px;height:1px;background:#c9c9c9"></div>
<div class="abs fl" style="left:658px;top:601.5px">End Date</div>
<div class="abs fv" style="left:658px;top:623px">2026-07-07</div>
<svg class="abs pen" style="left:1224px;top:621px" width="14" height="14" viewBox="0 0 14 14"><path d="M0.8 13.2 L1.6 9.8 L9.6 1.8 L12.2 4.4 L4.2 12.4Z" fill="#747474"/><path d="M10.4 1 L11.2 0.2 L13.8 2.8 L13 3.6Z" fill="#747474"/></svg>
<div class="abs" style="left:654px;top:643px;width:589px;height:1px;background:#c9c9c9"></div>
<div class="abs fl" style="left:658px;top:650.5px">Has Active Records</div>
<div class="abs cb" style="left:658px;top:674px"></div><svg class="abs" style="left:661px;top:678px" width="11" height="9" viewBox="0 0 11 9"><path d="M1 4.5L4 7.5L10 1.5" fill="none" stroke="#a8a8a8" stroke-width="1.6"/></svg>
<svg class="abs pen" style="left:1224px;top:669px" width="14" height="14" viewBox="0 0 14 14"><path d="M0.8 13.2 L1.6 9.8 L9.6 1.8 L12.2 4.4 L4.2 12.4Z" fill="#747474"/><path d="M10.4 1 L11.2 0.2 L13.8 2.8 L13 3.6Z" fill="#747474"/></svg>
<div class="abs" style="left:654px;top:697px;width:589px;height:1px;background:#c9c9c9"></div>
<div class="abs fl" style="left:658px;top:704.5px">Owner</div>
<div class="abs" style="left:658px;top:725px;width:20px;height:20px;border-radius:3px;background:#516a8d"></div><svg class="abs" style="left:658px;top:725px" width="20" height="20" viewBox="0 0 20 20"><path d="M10 6 C13.5 6 14.5 8.5 14.2 12 C14 15.5 12.3 18 10 18 C7.7 18 6 15.5 5.8 12 C5.5 8.5 6.5 6 10 6Z" fill="#fff"/><circle cx="5.5" cy="5.5" r="1.2" fill="#fff"/><circle cx="14.5" cy="5.5" r="1.2" fill="#fff"/><ellipse cx="10" cy="8.2" rx="1.6" ry="1.1" fill="#516a8d"/></svg>
<div class="abs fv" style="left:684px;top:727px;color:#0b5cab;border-bottom:1px dotted #0b5cab;line-height:17px">Momentum Worldwide</div>
<svg class="abs" style="left:1224px;top:729px" width="15" height="15" viewBox="0 0 15 15"><circle cx="6" cy="7.2" r="2.5" fill="#747474"/><path d="M1.5 13.8 C2 11.5 3.5 10.5 6 10.5 C8.5 10.5 10 11.5 10.5 13.8Z" fill="#747474"/><path d="M7 2.6 Q10.3 2.2 11.2 5" fill="none" stroke="#747474" stroke-width="1.3"/><path d="M9.3 4.6 L13.2 4.4 L11.4 7.2Z" fill="#747474"/></svg>
<div class="abs" style="left:654px;top:749px;width:589px;height:1px;background:#c9c9c9"></div>
<!-- sections -->
<div class="abs sect" style="top:767px"></div>
<div class="abs schev" style="left:43px;top:777px"></div>
<div class="abs stt" style="left:63px;top:773px">Youth Membership (18–25)</div>
<div class="abs fl" style="left:45px;top:814px">Membership Fees - Youth(18-25)</div>
<div class="abs fv" style="left:45px;top:836px">$100.00</div>
<svg class="abs pen" style="left:611px;top:835px" width="14" height="14" viewBox="0 0 14 14"><path d="M0.8 13.2 L1.6 9.8 L9.6 1.8 L12.2 4.4 L4.2 12.4Z" fill="#747474"/><path d="M10.4 1 L11.2 0.2 L13.8 2.8 L13 3.6Z" fill="#747474"/></svg>
<div class="abs" style="left:41px;top:856px;width:589px;height:1px;background:#c9c9c9"></div>
<div class="abs fl" style="left:658px;top:814px">BAP % - Youth</div>
<div class="abs fv" style="left:658px;top:836px">25.00%</div>
<svg class="abs pen" style="left:1224px;top:835px" width="14" height="14" viewBox="0 0 14 14"><path d="M0.8 13.2 L1.6 9.8 L9.6 1.8 L12.2 4.4 L4.2 12.4Z" fill="#747474"/><path d="M10.4 1 L11.2 0.2 L13.8 2.8 L13 3.6Z" fill="#747474"/></svg>
<div class="abs" style="left:654px;top:856px;width:589px;height:1px;background:#c9c9c9"></div>
<div class="abs fl" style="left:658px;top:863px">Membership % - Youth</div>
<div class="abs fv" style="left:658px;top:885px">75.00%</div>
<div class="abs" style="left:654px;top:904px;width:589px;height:1px;background:#c9c9c9"></div>

<div class="abs sect" style="top:922px"></div>
<div class="abs schev" style="left:43px;top:932px"></div>
<div class="abs stt" style="left:63px;top:928px">Adult Membership (26–64)</div>
<div class="abs fl" style="left:45px;top:969px">Membership Fees - Adult(26-64)</div>
<div class="abs fv" style="left:45px;top:991px">$375.00</div>
<svg class="abs pen" style="left:611px;top:990px" width="14" height="14" viewBox="0 0 14 14"><path d="M0.8 13.2 L1.6 9.8 L9.6 1.8 L12.2 4.4 L4.2 12.4Z" fill="#747474"/><path d="M10.4 1 L11.2 0.2 L13.8 2.8 L13 3.6Z" fill="#747474"/></svg>
<div class="abs" style="left:41px;top:1011px;width:589px;height:1px;background:#c9c9c9"></div>
<div class="abs fl" style="left:658px;top:969px">BAP % - Adult</div>
<div class="abs fv" style="left:658px;top:991px">20.00%</div>
<svg class="abs pen" style="left:1224px;top:990px" width="14" height="14" viewBox="0 0 14 14"><path d="M0.8 13.2 L1.6 9.8 L9.6 1.8 L12.2 4.4 L4.2 12.4Z" fill="#747474"/><path d="M10.4 1 L11.2 0.2 L13.8 2.8 L13 3.6Z" fill="#747474"/></svg>
<div class="abs" style="left:654px;top:1011px;width:589px;height:1px;background:#c9c9c9"></div>
<div class="abs fl" style="left:658px;top:1018px">Membership % - Adult</div>
<div id="rightcard" class="abs card" style="left:1285px;top:422px;width:607px;height:376px"></div>
<div class="abs" style="left:1313px;top:444px;font-size:15.3px;line-height:20px;color:#181818;font-weight:bold;letter-spacing:0.1px">Activity</div>
<div class="abs" style="left:1419px;top:444px;font-size:15.3px;line-height:20px;color:#444">Chatter</div>
<div class="abs" style="left:1301px;top:473px;width:575px;height:1px;background:#747474"></div>
<div class="abs" style="left:1301px;top:471px;width:82px;height:3px;background:#3b82d6"></div>
<!-- action buttons -->
<div class="abs btn" style="left:1305px;top:488px;width:89px;height:32px"></div>
<div class="abs" style="left:1362px;top:489px;width:1px;height:30px;background:#8c8c8c"></div>
<div class="abs" style="left:1322px;top:492px;width:24px;height:24px;border-radius:4px;background:#cb5fe8"></div>
<svg class="abs" style="left:1322px;top:492px" width="24" height="24" viewBox="0 0 24 24"><rect x="5" y="6.5" width="14" height="13" rx="1.2" fill="#fff"/><rect x="7.5" y="4.3" width="1.8" height="3.5" rx=".9" fill="#fff"/><rect x="14.7" y="4.3" width="1.8" height="3.5" rx=".9" fill="#fff"/><rect x="5" y="8.6" width="14" height="1" fill="#cb5fe8"/><g fill="#cb5fe8"><rect x="7" y="11.3" width="2.2" height="1.8"/><rect x="10.9" y="11.3" width="2.2" height="1.8"/><rect x="14.8" y="11.3" width="2.2" height="1.8"/><rect x="7" y="14.8" width="2.2" height="1.8"/><rect x="10.9" y="14.8" width="2.2" height="1.8"/><rect x="14.8" y="14.8" width="2.2" height="1.8"/></g></svg>
<svg class="abs" style="left:1372px;top:502px" width="12" height="7" viewBox="0 0 12 7"><path d="M0.5 0.5H11.5L6 6.5Z" fill="#747474"/></svg>

<div class="abs btn" style="left:1398px;top:488px;width:89px;height:32px;border-color:#8c8c8c #c9c9c9 #c9c9c9 #8c8c8c"></div>
<div class="abs" style="left:1398px;top:488px;width:58px;height:32px;border:1px solid #8c8c8c;border-radius:4px 0 0 4px"></div>
<div class="abs" style="left:1415px;top:492px;width:24px;height:24px;border-radius:4px;background:#0aa25a"></div>
<svg class="abs" style="left:1415px;top:492px" width="24" height="24" viewBox="0 0 24 24"><path d="M5.5 7.5L7 9L9.5 6" fill="none" stroke="#fff" stroke-width="1.3"/><rect x="10.5" y="7" width="8" height="1.8" rx=".9" fill="#fff"/><circle cx="7" cy="12.3" r="1" fill="#fff"/><rect x="10.5" y="11.4" width="8" height="1.8" rx=".9" fill="#fff"/><circle cx="7" cy="16.7" r="1" fill="#fff"/><rect x="10.5" y="15.8" width="8" height="1.8" rx=".9" fill="#fff"/></svg>
<svg class="abs" style="left:1465px;top:502px" width="12" height="7" viewBox="0 0 12 7"><path d="M0.5 0.5H11.5L6 6.5Z" fill="#c9c9c9"/></svg>

<div class="abs btn" style="left:1491px;top:488px;width:89px;height:32px;border-color:#8c8c8c #c9c9c9 #c9c9c9 #8c8c8c"></div>
<div class="abs" style="left:1491px;top:488px;width:58px;height:32px;border:1px solid #8c8c8c;border-radius:4px 0 0 4px"></div>
<div class="abs" style="left:1508px;top:492px;width:24px;height:24px;border-radius:4px;background:#0a9e98"></div>
<svg class="abs" style="left:1508px;top:492px" width="24" height="24" viewBox="0 0 24 24"><rect x="7" y="5.5" width="11" height="13" rx="1.5" fill="#fff"/><g fill="#0a9e98"><rect x="6" y="8" width="2" height="1"/><rect x="6" y="11.5" width="2" height="1"/><rect x="6" y="15" width="2" height="1"/></g><path d="M10.5 9 C10 10.5 11.5 14 14.5 14.8 L15.5 13.6 L14 12.6 L13.3 13.2 C12.3 12.6 11.7 11.8 11.5 10.9 L12.1 10.2 L11.3 8.6Z" fill="#0a9e98"/></svg>
<svg class="abs" style="left:1558px;top:502px" width="12" height="7" viewBox="0 0 12 7"><path d="M0.5 0.5H11.5L6 6.5Z" fill="#c9c9c9"/></svg>

<div class="abs btn" style="left:1584px;top:488px;width:89px;height:32px"></div>
<div class="abs" style="left:1641px;top:489px;width:1px;height:30px;background:#8c8c8c"></div>
<div class="abs" style="left:1601px;top:492px;width:24px;height:24px;border-radius:4px;background:#939393"></div>
<svg class="abs" style="left:1601px;top:492px" width="24" height="24" viewBox="0 0 24 24"><rect x="5" y="7" width="14" height="10" rx="1" fill="#fff"/><path d="M5.5 7.5L12 12.5L18.5 7.5" fill="none" stroke="#939393" stroke-width="1.3"/></svg>
<svg class="abs" style="left:1651px;top:502px" width="12" height="7" viewBox="0 0 12 7"><path d="M0.5 0.5H11.5L6 6.5Z" fill="#747474"/></svg>

<div class="abs" style="left:1606px;top:548px;font-size:13px;line-height:16px;color:#747474;white-space:nowrap">Filters: All time • All activities • All types</div>
<div class="abs" style="left:1844px;top:538px;width:32px;height:32px;border:1px solid #747474;border-radius:4px;background:#fff"></div>
<svg class="abs" style="left:1854px;top:548px" width="13" height="13" viewBox="0 0 24 24"><path fill="#747474" d="M10 1h4l.6 3a8 8 0 0 1 2.2 1.3l2.9-1 2 3.4-2.3 2a8 8 0 0 1 0 2.6l2.3 2-2 3.4-2.9-1A8 8 0 0 1 14.6 20l-.6 3h-4l-.6-3a8 8 0 0 1-2.2-1.3l-2.9 1-2-3.4 2.3-2a8 8 0 0 1 0-2.6l-2.3-2 2-3.4 2.9 1A8 8 0 0 1 9.4 4Z"/><circle cx="12" cy="12" r="3.5" fill="#fff"/></svg>
<div class="abs lnk" style="left:1678px;top:580px">Refresh</div>
<div class="abs" style="left:1730px;top:585px;width:3px;height:3px;border-radius:2px;background:#181818"></div>
<div class="abs lnk" style="left:1743px;top:580px">Expand All</div>
<div class="abs" style="left:1813px;top:585px;width:3px;height:3px;border-radius:2px;background:#181818"></div>
<div class="abs lnk" style="left:1826px;top:580px">View All</div>

<div class="abs" style="left:1302px;top:613px;width:573px;height:32px;background:#f3f3f3;border-radius:4px"></div>
<div class="abs" style="left:1314px;top:623px;width:8px;height:8px;border-right:2px solid #181818;border-bottom:2px solid #181818;transform:rotate(45deg)"></div>
<div class="abs" style="left:1334px;top:621px;font-size:13px;line-height:16px;font-weight:bold;color:#181818">Upcoming &amp; Overdue</div>
<div class="abs" style="left:1302px;top:656px;width:573px;text-align:center;font-size:12.85px;line-height:19px;color:#181818">No activities to show.<br>Get started by sending an email, scheduling a task, and more.</div>
<div class="abs" style="left:1301px;top:709px;width:575px;height:1px;background:#c9c9c9"></div>
<div class="abs" style="left:1302px;top:728px;width:573px;text-align:center;font-size:12.8px;line-height:16px;color:#181818">No past activity. Past meetings and tasks marked as done show up here.</div>
<div id="scroll" class="abs">
  <svg class="abs" style="left:3px;top:5px" width="9" height="7" viewBox="0 0 9 7"><path d="M0 7L4.5 0L9 7Z" fill="#a3a3a3"/></svg>
  <div class="abs" style="left:3px;top:18px;width:9px;height:666px;border-radius:5px;background:#8b8b8b"></div>
  <svg class="abs" style="left:3px;top:900px" width="9" height="7" viewBox="0 0 9 7"><path d="M0 0L4.5 7L9 0Z" fill="#a3a3a3"/></svg>
</div>
<div class="abs" style="left:1890px;top:243px;width:15px;height:33px;background:rgba(255,255,255,.45);border-radius:4px 0 0 4px"></div>
<div class="abs" style="left:1894px;top:247px;width:11px;height:25px;background:linear-gradient(180deg,#9cc5cc 0,#9cc5cc 9px,#1f6aa8 9px,#2a75b0 100%)"></div>
<svg class="abs" style="left:1897px;top:255px" width="8" height="13" viewBox="0 0 8 13"><path d="M8 0V13L0 6.5Z" fill="rgba(255,255,255,.45)"/></svg>
<div id="taskbar" class="abs">
  <div class="abs" style="left:21px;top:13px;width:20px;height:20px;border-radius:10px;background:linear-gradient(135deg,#ffd000,#ff9a00 60%,#f06a00)"></div>
  <div class="abs" style="left:51px;top:9px;font-size:11px;line-height:13px;color:#fff;font-weight:bold">78°F</div>
  <div class="abs" style="left:51px;top:25px;font-size:12px;line-height:14px;color:#e0e0e0">Sunny</div>
  <!-- windows logo -->
  <svg class="abs" style="left:509px;top:14px" width="22" height="22" viewBox="0 0 22 22"><defs><linearGradient id="wg" x1="0" y1="0" x2="1" y2="1"><stop offset="0" stop-color="#7fe3ff"/><stop offset="1" stop-color="#1aa7ea"/></linearGradient></defs><g fill="url(#wg)"><rect x="0" y="0" width="10.4" height="10.4" rx=".6"/><rect x="11.6" y="0" width="10.4" height="10.4" rx=".6"/><rect x="0" y="11.6" width="10.4" height="10.4" rx=".6"/><rect x="11.6" y="11.6" width="10.4" height="10.4" rx=".6"/></g></svg>
  <!-- search pill -->
  <div class="abs" style="left:543px;top:8px;width:219px;height:32px;border-radius:16px;background:#2e2e2e;border:1px solid #3a3a3a"></div>
  <svg class="abs" style="left:555px;top:16px" width="16" height="16" viewBox="0 0 16 16"><circle cx="6.5" cy="6.5" r="5" fill="none" stroke="#e8e8e8" stroke-width="1.5"/><path d="M10.2 10.2L14.5 14.5" stroke="#e8e8e8" stroke-width="1.6"/></svg>
  <div class="abs" style="left:580px;top:16px;font-size:13px;line-height:16px;color:#dcdcdc">Search</div>
  <svg class="abs" style="left:712px;top:10px" width="46" height="30" viewBox="0 0 46 30"><circle cx="24" cy="12" r="10.5" fill="#f0b64a"/><circle cx="20" cy="9" r="2" fill="#d99a30"/><circle cx="27" cy="14" r="1.6" fill="#d99a30"/><path d="M0 28 L5 18 L8 24 L12 17 L16 25 L30 25 L34 17 L38 24 L42 18 L46 28Z" fill="#3d55c0"/><path d="M6 28 Q23 20 40 28Z" fill="#dfe6f5"/></svg>
  <!-- task view -->
  <div class="abs" style="left:775px;top:23px;width:18px;height:15px;border-radius:2px;background:linear-gradient(180deg,#8a8a8a,#5a5a5a)"></div>
  <div class="abs" style="left:781px;top:13px;width:18px;height:16px;border-radius:2px;background:linear-gradient(180deg,#e8e8e8,#bdbdbd)"></div>
  <!-- meet -->
  <svg class="abs" style="left:819px;top:13px" width="23" height="23" viewBox="0 0 23 23"><path d="M11.5 0.5A11 11 0 1 1 5 20.5L0.5 22.5L2 17.5A11 11 0 0 1 11.5 0.5Z" fill="#5b5fc7"/><rect x="5.5" y="7.5" width="8.5" height="8" rx="1.2" fill="#e8e8f4"/><path d="M14.5 10.5L18 8V15L14.5 12.5Z" fill="#e8e8f4"/></svg>
  <!-- folder -->
  <svg class="abs" style="left:862px;top:13px" width="25" height="22" viewBox="0 0 25 22"><path d="M0 1.5A1.5 1.5 0 0 1 1.5 0H8L10 2H23.5A1.5 1.5 0 0 1 25 3.5V22H0Z" fill="#e2a917"/><rect x="0" y="4" width="25" height="18" fill="#f5c53d"/><rect x="6" y="15" width="13" height="7" rx="1.5" fill="#1d7fd4"/></svg>
  <div class="abs" style="left:872px;top:41px;width:6px;height:3px;border-radius:2px;background:#9a9a9a"></div>
  <!-- edge -->
  <svg class="abs" style="left:907px;top:12px" width="24" height="24" viewBox="0 0 24 24"><defs><linearGradient id="eg" x1="0" y1="0" x2="1" y2="1"><stop offset="0" stop-color="#30c5e8"/><stop offset=".6" stop-color="#3bc272"/><stop offset="1" stop-color="#2a9d5a"/></linearGradient></defs><circle cx="12" cy="12" r="12" fill="url(#eg)"/><path d="M1 14A11 11 0 0 0 20 19C15 22 7 21 7 14C7 10 11 9 13 11C11 11 9.5 12.5 10 15C11 19 18 19 22 15C21 9 17 5 11 5C5 5 1 9 1 14Z" fill="#0f6cbd"/><circle cx="13" cy="14" r="3" fill="#1c1c1c"/></svg>
  <!-- firefox -->
  <svg class="abs" style="left:951px;top:11px" width="24" height="25" viewBox="0 0 24 25"><circle cx="12" cy="13.5" r="11" fill="#ff6f2b"/><path d="M3 8 Q6 1 14 1 Q22 4 23 13 Q21 5 13 6Z" fill="#ffbd3a"/><circle cx="12" cy="14" r="5.5" fill="#7b3ff2"/><path d="M4 12 Q8 8 13 10 Q9 11 9 15Z" fill="#ff3f5a"/></svg>
  <!-- chrome 1 -->
  <svg class="abs chr" style="left:995px;top:13px" width="24" height="24" viewBox="0 0 24 24"><circle cx="12" cy="12" r="12" fill="#ea4335"/><path d="M12 12 L1.6 6 A12 12 0 0 0 12 24Z" fill="#34a853"/><path d="M12 12 L12 24 A12 12 0 0 0 22.4 6Z" fill="#fbbc04"/><circle cx="12" cy="12" r="5.5" fill="#fff"/><circle cx="12" cy="12" r="4.3" fill="#4285f4"/></svg>
  <div class="abs" style="left:1008px;top:7px;width:16px;height:16px;border-radius:8px;background:radial-gradient(circle at 50% 35%,#5a4030 25%,#b9c2c8 30%,#cfd8dc 60%)"></div>
  <div class="abs" style="left:1004px;top:41px;width:6px;height:3px;border-radius:2px;background:#9a9a9a"></div>
  <!-- chrome 2 -->
  <svg class="abs chr" style="left:1039px;top:13px" width="24" height="24" viewBox="0 0 24 24"><circle cx="12" cy="12" r="12" fill="#ea4335"/><path d="M12 12 L1.6 6 A12 12 0 0 0 12 24Z" fill="#34a853"/><path d="M12 12 L12 24 A12 12 0 0 0 22.4 6Z" fill="#fbbc04"/><circle cx="12" cy="12" r="5.5" fill="#fff"/><circle cx="12" cy="12" r="4.3" fill="#4285f4"/></svg>
  <div class="abs" style="left:1052px;top:13px;width:11px;height:11px;border-radius:3px;background:#2b2b2b;transform:rotate(20deg)"></div>
  <!-- active chrome -->
  <div class="abs" style="left:1075px;top:4px;width:39px;height:40px;border-radius:4px;background:#2a2a2a"></div>
  <svg class="abs chr" style="left:1083px;top:13px" width="24" height="24" viewBox="0 0 24 24"><circle cx="12" cy="12" r="12" fill="#ea4335"/><path d="M12 12 L1.6 6 A12 12 0 0 0 12 24Z" fill="#34a853"/><path d="M12 12 L12 24 A12 12 0 0 0 22.4 6Z" fill="#fbbc04"/><circle cx="12" cy="12" r="5.5" fill="#fff"/><circle cx="12" cy="12" r="4.3" fill="#4285f4"/></svg>
  <div class="abs" style="left:1097px;top:7px;width:15px;height:15px;border-radius:8px;background:#b5154b;color:#fff;font-size:9px;line-height:15px;text-align:center">S</div>
  <div class="abs" style="left:1087px;top:40px;width:16px;height:3px;border-radius:2px;background:#4cc2ff"></div>
  <!-- monitor -->
  <div class="abs" style="left:1127px;top:17px;width:24px;height:18px;background:#a8c8dc;border:1px solid #8aa0ac"></div>
  <svg class="abs" style="left:1128px;top:18px" width="22" height="16" viewBox="0 0 22 16"><path d="M0 16 L0 13 L4 12 L6 5 L8 11 L11 10 L13 4 L15 12 L18 11 L22 13 L22 16Z" fill="#3f8fd0"/></svg>
  <!-- cmd -->
  <div class="abs" style="left:1171px;top:16px;width:22px;height:19px;background:#000;border:1px solid #8a8a8a;border-top-width:2px"></div>
  <div class="abs" style="left:1174px;top:19px;font-size:6px;line-height:7px;color:#ddd;font-family:'Liberation Mono',monospace">C:\_</div>
  <!-- postgres -->
  <svg class="abs" style="left:1215px;top:13px" width="24" height="24" viewBox="0 0 24 24"><path d="M4 3C8 0 12 2 12 2C16 0 21 1 21 6C21 10 19 13 18 15C17 19 16 23 13 22C11 21 12 17 11 16C9 17 6 18 5 14C3 10 1 6 4 3Z" fill="#336791" stroke="#cfe0ee" stroke-width="1"/><path d="M12 5C14 8 14 12 12 15" fill="none" stroke="#cfe0ee" stroke-width="1"/></svg>
  <!-- vscode -->
  <svg class="abs" style="left:1259px;top:13px" width="24" height="24" viewBox="0 0 24 24"><path d="M17.5 0.5 L24 3.5 V20.5 L17.5 23.5 L6 13 L2.5 16 L0.5 14.8 V9.2 L2.5 8 L6 11 L17.5 0.5Z M17.5 7 L10.5 12 L17.5 17Z" fill="#1f8ad2" fill-rule="evenodd"/><path d="M17.5 0.5 L24 3.5 V20.5 L17.5 23.5Z" fill="#2aa2ea"/></svg>
  <div class="abs" style="left:1268px;top:41px;width:6px;height:3px;border-radius:2px;background:#9a9a9a"></div>
  <!-- pycharm -->
  <svg class="abs" style="left:1303px;top:13px" width="24" height="24" viewBox="0 0 24 24"><path d="M0 0H17L24 8V24H4L0 19Z" fill="#21d789"/><path d="M0 0H17L12 6H0Z" fill="#07c3f2"/><path d="M24 8V24H12Z" fill="#fcf84a"/><rect x="4.5" y="4.5" width="15" height="15" fill="#000"/><text x="6" y="12" font-size="7" fill="#fff" font-family="Liberation Sans" font-weight="bold">PC</text><rect x="6" y="16" width="5" height="1" fill="#fff"/></svg>
  <!-- git -->
  <svg class="abs" style="left:1347px;top:13px" width="24" height="24" viewBox="0 0 24 24"><g transform="rotate(45 12 12)"><rect x="3" y="3" width="8.5" height="8.5" fill="#e06b6b"/><rect x="12.5" y="3" width="8.5" height="8.5" fill="#74c05c"/><rect x="3" y="12.5" width="8.5" height="8.5" fill="#5b8fe0"/><rect x="12.5" y="12.5" width="8.5" height="8.5" fill="#efd36a"/></g><path d="M11 3V18M11 8L16 13" stroke="#222" stroke-width="1.3"/><circle cx="11" cy="18" r="1.8" fill="#222"/><circle cx="16" cy="13" r="1.8" fill="#222"/></svg>
  <!-- taskpro -->
  <div class="abs" style="left:1391px;top:12px;width:24px;height:24px;background:#e6e6e6"></div>
  <svg class="abs" style="left:1393px;top:14px" width="20" height="20" viewBox="0 0 20 20"><rect x="3" y="2" width="14" height="9" rx="1" fill="#2a7fb8"/><rect x="4.5" y="3.5" width="11" height="6" fill="#d6f0e0"/><rect x="8.5" y="11" width="3" height="2" fill="#2a7fb8"/><rect x="6" y="13" width="8" height="1" fill="#2a7fb8"/><rect x="2" y="16" width="16" height="2" fill="#9aa"/></svg>
  <div class="abs" style="left:1400px;top:41px;width:6px;height:3px;border-radius:2px;background:#9a9a9a"></div>
  <!-- tray -->
  <svg class="abs" style="left:1671px;top:20px" width="12" height="8" viewBox="0 0 12 8"><path d="M1 7L6 2L11 7" fill="none" stroke="#e8e8e8" stroke-width="1.4"/></svg>
  <svg class="abs" style="left:1700px;top:17px" width="18" height="13" viewBox="0 0 18 13"><path d="M4 12.5A3.5 3.5 0 0 1 3.5 5.6A5 5 0 0 1 12.8 4A4.3 4.3 0 0 1 14 12.5Z" fill="#c8c8c8"/></svg>
  <svg class="abs" style="left:1732px;top:18px" width="17" height="12" viewBox="0 0 17 12"><rect x="0.7" y="0.7" width="15.6" height="10.6" rx="1.5" fill="none" stroke="#e0e0e0" stroke-width="1.3"/><g fill="#e0e0e0"><rect x="3" y="3" width="1.6" height="1.4"/><rect x="6" y="3" width="1.6" height="1.4"/><rect x="9" y="3" width="1.6" height="1.4"/><rect x="12" y="3" width="1.6" height="1.4"/><rect x="4.5" y="5.5" width="1.6" height="1.4"/><rect x="7.5" y="5.5" width="1.6" height="1.4"/><rect x="10.5" y="5.5" width="1.6" height="1.4"/><rect x="5" y="8" width="7" height="1.4"/></g></svg>
  <svg class="abs" style="left:1764px;top:17px" width="17" height="13" viewBox="0 0 17 13"><g fill="none" stroke="#e8e8e8" stroke-width="1.4"><path d="M1 5A11 11 0 0 1 16 5"/><path d="M3.5 7.5A7.5 7.5 0 0 1 13.5 7.5"/><path d="M6 10A4 4 0 0 1 11 10"/></g><circle cx="8.5" cy="11.8" r="1.2" fill="#e8e8e8"/></svg>
  <svg class="abs" style="left:1789px;top:16px" width="17" height="15" viewBox="0 0 17 15"><path d="M1 5H4L8 1.5V13.5L4 10H1Z" fill="none" stroke="#e8e8e8" stroke-width="1.3" stroke-linejoin="round"/><g fill="none" stroke="#e8e8e8" stroke-width="1.3"><path d="M10.5 5A3 3 0 0 1 10.5 10"/><path d="M12.5 3A6 6 0 0 1 12.5 12"/><path d="M14.5 1.2A8.5 8.5 0 0 1 14.5 13.8"/></g></svg>
  <div class="abs" style="left:1817px;top:9px;width:60px;text-align:right;font-size:11.5px;line-height:14px;color:#f0f0f0">12:19 PM</div>
  <div class="abs" style="left:1812px;top:25px;width:65px;text-align:right;font-size:12.2px;line-height:14px;color:#f0f0f0">12/4/2025</div>
  <svg class="abs" style="left:1885px;top:17px" width="14" height="16" viewBox="0 0 14 16"><path d="M7 0.5C10.5 0.5 12 3 12 6.5V9.5L13.8 12.5H0.2L2 9.5V6.5C2 3 3.5 0.5 7 0.5Z" fill="#6dd0ea"/><path d="M5 13.5H9A2 2 0 0 1 5 13.5Z" fill="#6dd0ea"/></svg>
</div>

</body></html>
